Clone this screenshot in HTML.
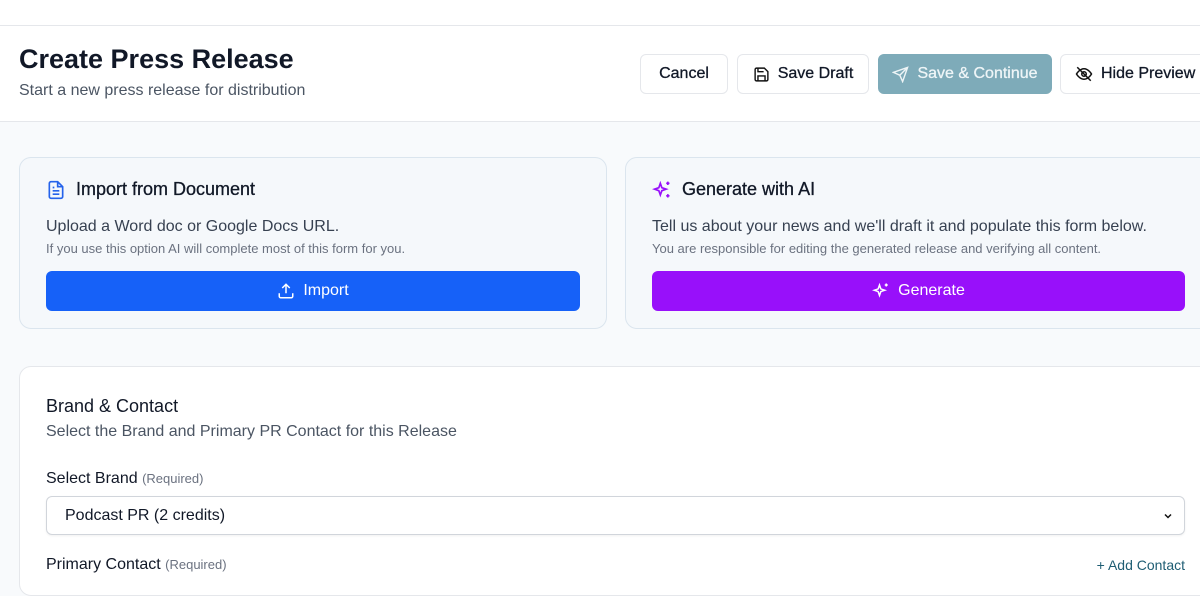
<!DOCTYPE html>
<html><head><style>
*{box-sizing:border-box;margin:0;padding:0}
body{width:1200px;height:575px;overflow:hidden;font-family:"Liberation Sans",sans-serif;background:#f8fafc;color:#111827;position:relative}
.top{position:absolute;left:0;top:0;width:1200px;height:122px;background:#fff;border-bottom:1px solid #e5e7eb}
.top:before{content:"";position:absolute;left:0;top:25px;width:1200px;height:1px;background:#e5e7eb}
h1{position:absolute;left:19px;top:44px;font-size:27px;font-weight:700;color:#111827}
.sub{position:absolute;left:19px;top:82px;font-size:16px;color:#4b5563}
.btn{position:absolute;top:54px;height:40px;border:1px solid #e5e7eb;border-radius:6px;background:#fff;font-size:16px;display:flex;align-items:center;justify-content:center;gap:8px;color:#111827;-webkit-text-stroke:0.3px currentColor}
.card{position:absolute;border:1px solid #dbe5ee;border-radius:12px;background:#f5f8fb}
.ct{position:absolute;left:26px;top:21px;font-size:18px;display:flex;align-items:center;gap:10px;-webkit-text-stroke:0.3px currentColor}
.l1{position:absolute;left:26px;top:60px;font-size:16px;color:#374151}
.l2{position:absolute;left:26px;top:83px;font-size:13px;color:#6b7280}
.big{position:absolute;left:26px;top:113px;height:40px;border-radius:6px;color:#fff;font-size:16px;display:flex;align-items:center;justify-content:center;gap:8px}
.lab{position:absolute;left:46px;font-size:16px;color:#111827}
.lab small{font-size:13px;color:#6b7280}
</style></head><body>
<div class="top">
<h1>Create Press Release</h1>
<div class="sub">Start a new press release for distribution</div>
<div class="btn" style="left:640px;width:88px">Cancel</div>
<div class="btn" style="left:737px;width:132px"><svg width="17" height="17" viewBox="0 0 24 24" fill="none" stroke="#111" stroke-width="2"><path d="M5 3h11l5 5v11a2 2 0 0 1-2 2H5a2 2 0 0 1-2-2V5a2 2 0 0 1 2-2z"/><path d="M7 3v5h8M7 21v-7h10v7"/></svg>Save Draft</div>
<div class="btn" style="left:878px;width:174px;background:#7eabb9;border-color:#7eabb9;color:#eef5f7"><svg width="17" height="17" viewBox="0 0 24 24" fill="none" stroke="#eef5f7" stroke-width="2"><path d="M22 2L11 13M22 2l-7 20-4-9-9-4z"/></svg>Save &amp; Continue</div>
<div class="btn" style="left:1060px;width:160px;justify-content:flex-start;padding-left:14px"><svg width="18" height="18" viewBox="0 0 24 24" fill="none" stroke="#111" stroke-width="2"><path d="M2 12s4-7 10-7 10 7 10 7-4 7-10 7S2 12 2 12z"/><circle cx="12" cy="12" r="3"/><path d="M3 3l18 18"/></svg>Hide Preview</div>
</div>
<div class="card" style="left:19px;top:157px;width:588px;height:172px">
<div class="ct"><svg width="20" height="20" viewBox="0 0 24 24" fill="none" stroke="#2563eb" stroke-width="2"><path d="M14 2H6a2 2 0 0 0-2 2v16a2 2 0 0 0 2 2h12a2 2 0 0 0 2-2V8z"/><path d="M14 2v6h6M8 13h8M8 17h8M8 9h2"/></svg>Import from Document</div>
<div class="l1">Upload a Word doc or Google Docs URL.</div>
<div class="l2">If you use this option AI will complete most of this form for you.</div>
<div class="big" style="width:534px;background:#1661f8"><svg width="18" height="18" viewBox="0 0 24 24" fill="none" stroke="#fff" stroke-width="2"><path d="M21 15v4a2 2 0 0 1-2 2H5a2 2 0 0 1-2-2v-4M17 8l-5-5-5 5M12 3v12"/></svg>Import</div>
</div>
<div class="card" style="left:625px;top:157px;width:600px;height:172px">
<div class="ct"><svg width="20" height="20" viewBox="0 0 24 24" fill="none" stroke="#9810fa" stroke-width="2"><path d="M10 4l1.8 5.2L17 11l-5.2 1.8L10 18l-1.8-5.2L3 11l5.2-1.8z"/><path d="M19 2v4M17 4h4M19 17v4M17 19h4"/></svg>Generate with AI</div>
<div class="l1">Tell us about your news and we'll draft it and populate this form below.</div>
<div class="l2">You are responsible for editing the generated release and verifying all content.</div>
<div class="big" style="width:533px;background:#9810fa"><svg width="18" height="18" viewBox="0 0 24 24" fill="none" stroke="#fff" stroke-width="2"><path d="M10 4l1.8 5.2L17 11l-5.2 1.8L10 18l-1.8-5.2L3 11l5.2-1.8z"/><path d="M19 2v4M17 4h4"/></svg>Generate</div>
</div>
<div style="position:absolute;left:19px;top:366px;width:1200px;height:230px;background:#fff;border:1px solid #e5e7eb;border-radius:12px"></div>
<div class="lab" style="top:396px;font-size:18px">Brand &amp; Contact</div>
<div class="lab" style="top:423px;color:#4b5563">Select the Brand and Primary PR Contact for this Release</div>
<div class="lab" style="top:470px">Select Brand <small>(Required)</small></div>
<div style="position:absolute;left:46px;top:496px;width:1139px;height:39px;border:1px solid #d1d5db;border-radius:6px;box-shadow:0 1px 2px rgba(0,0,0,.06);padding:0 10px 0 18px;display:flex;align-items:center;justify-content:space-between;font-size:16px">Podcast PR (2 credits)<svg width="12" height="12" viewBox="0 0 24 24" fill="none" stroke="#111" stroke-width="3"><path d="M6 9l6 6 6-6"/></svg></div>
<div class="lab" style="top:556px">Primary Contact <small>(Required)</small></div>
<div style="position:absolute;left:1088px;top:557px;font-size:14px;color:#1e5d73;width:97px;text-align:right">+ Add Contact</div>
</body></html>
